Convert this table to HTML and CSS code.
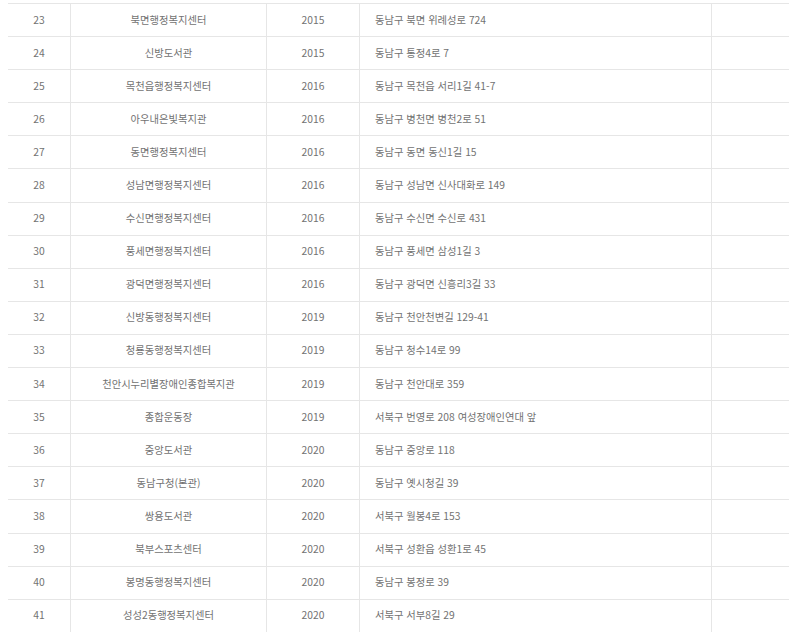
FILE: index.html
```html
<!DOCTYPE html>
<html lang="ko">
<head>
<meta charset="utf-8">
<link rel="stylesheet" href="styles.css">
</head>
<body>
<div class="table">
  <div class="row"><div class="c no">23</div><div class="c name">북면행정복지센터</div><div class="c yr">2015</div><div class="c addr">동남구 북면 위례성로 724</div><div class="c ex"></div></div>
  <div class="row"><div class="c no">24</div><div class="c name">신방도서관</div><div class="c yr">2015</div><div class="c addr">동남구 통정4로 7</div><div class="c ex"></div></div>
  <div class="row"><div class="c no">25</div><div class="c name">목천읍행정복지센터</div><div class="c yr">2016</div><div class="c addr">동남구 목천읍 서리1길 41-7</div><div class="c ex"></div></div>
  <div class="row"><div class="c no">26</div><div class="c name">아우내은빛복지관</div><div class="c yr">2016</div><div class="c addr">동남구 병천면 병천2로 51</div><div class="c ex"></div></div>
  <div class="row"><div class="c no">27</div><div class="c name">동면행정복지센터</div><div class="c yr">2016</div><div class="c addr">동남구 동면 동신1길 15</div><div class="c ex"></div></div>
  <div class="row"><div class="c no">28</div><div class="c name">성남면행정복지센터</div><div class="c yr">2016</div><div class="c addr">동남구 성남면 신사대화로 149</div><div class="c ex"></div></div>
  <div class="row"><div class="c no">29</div><div class="c name">수신면행정복지센터</div><div class="c yr">2016</div><div class="c addr">동남구 수신면 수신로 431</div><div class="c ex"></div></div>
  <div class="row"><div class="c no">30</div><div class="c name">풍세면행정복지센터</div><div class="c yr">2016</div><div class="c addr">동남구 풍세면 삼성1길 3</div><div class="c ex"></div></div>
  <div class="row"><div class="c no">31</div><div class="c name">광덕면행정복지센터</div><div class="c yr">2016</div><div class="c addr">동남구 광덕면 신흥리3길 33</div><div class="c ex"></div></div>
  <div class="row"><div class="c no">32</div><div class="c name">신방동행정복지센터</div><div class="c yr">2019</div><div class="c addr">동남구 천안천변길 129-41</div><div class="c ex"></div></div>
  <div class="row"><div class="c no">33</div><div class="c name">청룡동행정복지센터</div><div class="c yr">2019</div><div class="c addr">동남구 청수14로 99</div><div class="c ex"></div></div>
  <div class="row"><div class="c no">34</div><div class="c name">천안시누리별장애인종합복지관</div><div class="c yr">2019</div><div class="c addr">동남구 천안대로 359</div><div class="c ex"></div></div>
  <div class="row"><div class="c no">35</div><div class="c name">종합운동장</div><div class="c yr">2019</div><div class="c addr">서북구 번영로 208 여성장애인연대 앞</div><div class="c ex"></div></div>
  <div class="row"><div class="c no">36</div><div class="c name">중앙도서관</div><div class="c yr">2020</div><div class="c addr">동남구 중앙로 118</div><div class="c ex"></div></div>
  <div class="row"><div class="c no">37</div><div class="c name">동남구청(본관)</div><div class="c yr">2020</div><div class="c addr">동남구 옛시청길 39</div><div class="c ex"></div></div>
  <div class="row"><div class="c no">38</div><div class="c name">쌍용도서관</div><div class="c yr">2020</div><div class="c addr">서북구 월봉4로 153</div><div class="c ex"></div></div>
  <div class="row"><div class="c no">39</div><div class="c name">북부스포츠센터</div><div class="c yr">2020</div><div class="c addr">서북구 성환읍 성환1로 45</div><div class="c ex"></div></div>
  <div class="row"><div class="c no">40</div><div class="c name">봉명동행정복지센터</div><div class="c yr">2020</div><div class="c addr">동남구 봉정로 39</div><div class="c ex"></div></div>
  <div class="row last"><div class="c no">41</div><div class="c name">성성2동행정복지센터</div><div class="c yr">2020</div><div class="c addr">서북구 서부8길 29</div><div class="c ex"></div></div>
</div>
</body>
</html>
```

FILE: styles.css
```css
html, body {
  margin: 0;
  padding: 0;
  background: #ffffff;
}
body {
  font-family: "Noto Sans CJK KR", "Noto Sans", sans-serif;
  font-size: 10.3px;
  color: #727272;
}
.table {
  margin-left: 8px;
  padding-top: 3px;
  width: 781px;
}
.row {
  display: grid;
  grid-template-columns: 62px 196px 93px 352px 78px;
  height: 32.1px;
  border-top: 1px solid #e6e6e6;
}
.c {
  display: flex;
  align-items: center;
  justify-content: center;
  white-space: nowrap;
  padding-bottom: 2px;
}
.name, .yr, .addr, .ex {
  border-left: 1px solid #e6e6e6;
}
.addr {
  justify-content: flex-start;
  padding-left: 15px;
}
```
